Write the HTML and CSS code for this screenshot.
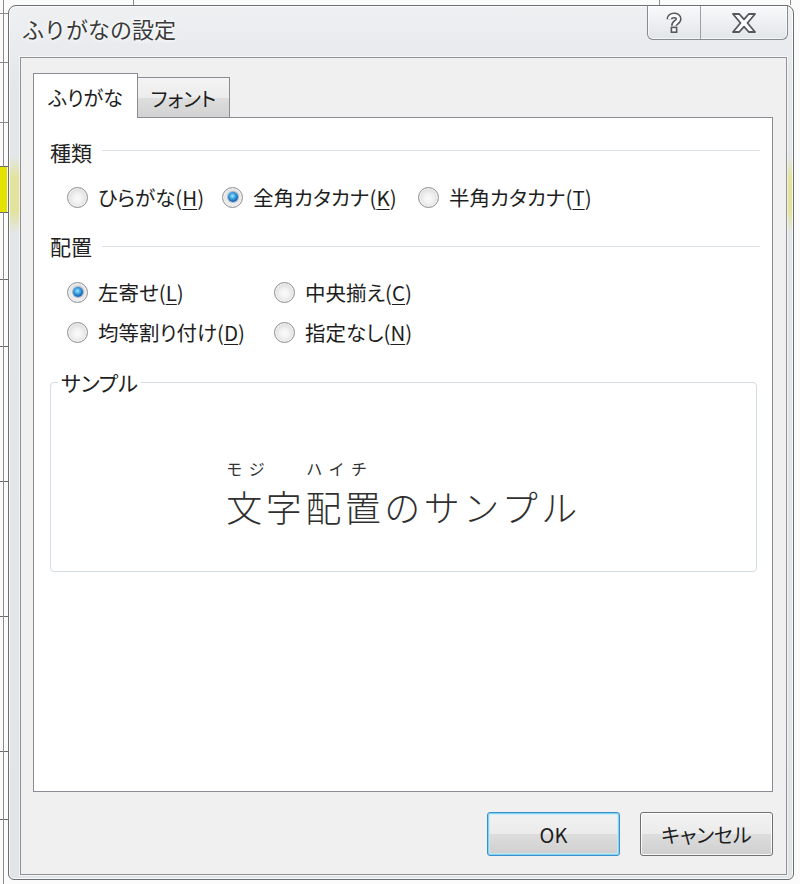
FILE: index.html
```html
<!DOCTYPE html>
<html lang="ja">
<head>
<meta charset="utf-8">
<title>ふりがなの設定</title>
<link rel="stylesheet" href="styles.css">
</head>
<body>
<div class="window">
  <div class="titlebar">
    <div class="title">ふりがなの設定</div>
    <div class="caption">
      <div class="cap-btn help">
        <svg width="16" height="22" viewBox="0 0 16 22">
          <path d="M3.4 7.2 C3.4 2.4 12.6 2.2 12.6 7 C12.6 10.4 8 10.2 8 13.8" fill="none" stroke="#55585c" stroke-width="6"/>
          <path d="M3.4 7.2 C3.4 2.4 12.6 2.2 12.6 7 C12.6 10.4 8 10.2 8 13.8" fill="none" stroke="#fdfdfd" stroke-width="3"/>
          <rect x="5.4" y="15.4" width="5.2" height="4.8" fill="#fdfdfd" stroke="#55585c" stroke-width="1.6"/>
        </svg>
      </div>
      <div class="cap-btn close">
        <svg width="24" height="20" viewBox="0 0 24 20">
          <polygon points="1,1 7.2,1 12,6.4 16.8,1 23,1 15.5,10 23,19 16.8,19 12,13.6 7.2,19 1,19 8.5,10" fill="#fdfdfd" stroke="#55585c" stroke-width="1.8" stroke-linejoin="round"/>
        </svg>
      </div>
    </div>
  </div>

  <div class="client">
    <div class="tabs">
      <div class="tab active">ふりがな</div>
      <div class="tab inactive">フォント</div>
    </div>
    <div class="panel">
      <div class="head h1"><span>種類</span><span class="rule"></span></div>
      <div class="row kind r1">
        <div class="radio"><span class="dot"></span><span>ひらがな(<u>H</u>)</span></div>
        <div class="radio"><span class="dot on"><span class="pip"></span></span><span>全角カタカナ(<u>K</u>)</span></div>
        <div class="radio"><span class="dot"></span><span>半角カタカナ(<u>T</u>)</span></div>
      </div>

      <div class="head h2"><span>配置</span><span class="rule"></span></div>
      <div class="row place r2">
        <div class="radio"><span class="dot on"><span class="pip"></span></span><span>左寄せ(<u>L</u>)</span></div>
        <div class="radio"><span class="dot"></span><span>中央揃え(<u>C</u>)</span></div>
      </div>
      <div class="row place r3">
        <div class="radio"><span class="dot"></span><span>均等割り付け(<u>D</u>)</span></div>
        <div class="radio"><span class="dot"></span><span>指定なし(<u>N</u>)</span></div>
      </div>

      <fieldset class="sample">
        <legend>サンプル</legend>
        <div class="sample-body">
          <div class="sample-inner">
            <div class="ruby"><span class="rb1">モジ</span><span>ハイチ</span></div>
            <div class="main">文字配置のサンプル</div>
          </div>
        </div>
      </fieldset>
    </div>

    <div class="buttons">
      <button class="btn default">OK</button>
      <button class="btn">キャンセル</button>
    </div>
  </div>
</div>
</body>
</html>
```

FILE: styles.css
```css
html, body {
  margin: 0;
}

body {
  width: 800px;
  height: 884px;
  box-sizing: border-box;
  overflow: hidden;
  padding: 5px 6px 0 8px;
  font-family: "Noto Sans CJK JP", "Noto Sans", sans-serif;
  font-feature-settings: "palt";
  background-color: #fbfbfb;
  background-image:
    linear-gradient(#e6e200, #e6e200),
    linear-gradient(#8c8c8c, #8c8c8c),
    linear-gradient(#8c8c8c, #8c8c8c),
    linear-gradient(#8c8c8c, #8c8c8c),
    linear-gradient(#8c8c8c, #8c8c8c),
    linear-gradient(#8c8c8c, #8c8c8c),
    linear-gradient(#8c8c8c, #8c8c8c),
    linear-gradient(#8c8c8c, #8c8c8c),
    linear-gradient(#6a6a6a, #6a6a6a),
    linear-gradient(#6a6a6a, #6a6a6a),
    repeating-linear-gradient(to bottom, transparent 0 66.5px, #6a6a6a 66.5px 67.5px);
  background-position:
    0 167px,
    3px 0,
    133px 0,
    659px 0,
    790px 0,
    0 13px,
    0 62px,
    0 122px,
    0 166px,
    0 212px,
    0 212px;
  background-size:
    7px 45px,
    1px 100%,
    1px 5px,
    1px 5px,
    1px 5px,
    8px 1px,
    8px 1px,
    8px 1px,
    8px 1px,
    8px 1px,
    8px 100%;
  background-repeat: no-repeat;
}

/* ---------- window frame ---------- */
.window {
  width: 786px;
  height: 875px;
  box-sizing: border-box;
  border: 1px solid #6b6e73;
  border-radius: 8px 8px 6px 6px;
  background:
    linear-gradient(to bottom, transparent 150px, rgba(226, 221, 70, 0.45) 172px, rgba(226, 221, 70, 0.45) 205px, transparent 228px),
    linear-gradient(to bottom, #eef0f2 0, #e4e7ea 80px, #e2e5e8 100%);
  box-shadow: inset 0 0 0 1px rgba(255, 255, 255, 0.75);
  display: flex;
  flex-direction: column;
}

.titlebar {
  flex: none;
  height: 51px;
  display: flex;
  justify-content: space-between;
  align-items: flex-start;
}

.title {
  margin: 8px 0 0 13px;
  font-size: 22px;
  line-height: 28px;
  color: #3a3a3a;
  font-feature-settings: normal;
  text-shadow: 0 0 6px #fff, 0 0 3px #fff;
}

.caption {
  display: flex;
  height: 35px;
  box-sizing: border-box;
  margin: -1px 5px 0 0;
  border: 1px solid #878b92;
  border-top-color: #6b6e73;
  border-radius: 0 0 6px 6px;
  overflow: hidden;
  background: linear-gradient(to bottom, rgba(255, 255, 255, 0.6), rgba(238, 240, 243, 0.5) 50%, rgba(222, 226, 230, 0.6));
  box-shadow: inset 0 0 0 1px rgba(255, 255, 255, 0.6);
}

.cap-btn {
  display: flex;
  align-items: center;
  justify-content: center;
}

.help {
  width: 52px;
  padding-top: 1px;
}

.close {
  width: 86px;
  border-left: 1px solid #9ba0a6;
}

/* ---------- client area ---------- */
.client {
  flex: 1;
  margin: 0 6px 4px 11px;
  border: 1px solid #8f9296;
  background: #f0f0f0;
  display: flex;
  flex-direction: column;
  box-shadow: 0 0 0 1px rgba(255, 255, 255, 0.55);
}

.tabs {
  flex: none;
  display: flex;
  align-items: flex-end;
  height: 45px;
  margin: 15px 0 -1px 12px;
  position: relative;
  z-index: 1;
}

.tab {
  box-sizing: border-box;
  display: flex;
  align-items: center;
  justify-content: center;
  font-size: 20px;
  color: #1e1e1e;
  border: 1px solid #898c95;
  border-bottom: none;
}

.tab.active {
  width: 105px;
  height: 45px;
  padding-top: 3px;
  background: #fff;
}

.tab.inactive {
  width: 92px;
  height: 40px;
  margin-bottom: 1px;
  padding-top: 2px;
  border-left: none;
  background: linear-gradient(to bottom, #f4f4f4, #ececec 50%, #dedede 51%, #d2d2d2);
}

.panel {
  flex: none;
  height: 675px;
  box-sizing: border-box;
  margin: 0 13px 0 12px;
  padding: 0 12px 0 16px;
  border: 1px solid #898c95;
  background: #fff;
  display: flex;
  flex-direction: column;
}

.head {
  display: flex;
  align-items: center;
  gap: 10px;
  height: 24px;
  font-size: 21px;
  line-height: 24px;
  color: #222;
}

.head .rule {
  flex: 1;
  height: 1px;
  margin-top: -3px;
  background: #dbe2e9;
}

.h1 { margin-top: 22px; }
.r1 { margin-top: 21px; }
.h2 { margin-top: 25px; }
.r2 { margin-top: 22px; }
.r3 { margin-top: 16px; }

.h2 .rule {
  margin-top: 0;
}

.row {
  display: grid;
  height: 24px;
  padding-left: 17px;
  align-items: center;
}

.row.kind {
  grid-template-columns: 155px 196px auto;
}

.row.place {
  grid-template-columns: 207px auto;
}

.radio {
  display: flex;
  align-items: center;
  gap: 10px;
  font-size: 20.5px;
  line-height: 24px;
  color: #1e1e1e;
  white-space: nowrap;
}

.radio u {
  text-decoration-thickness: 1px;
  text-underline-offset: 3px;
}

.dot {
  flex: none;
  width: 21px;
  height: 21px;
  box-sizing: border-box;
  border-radius: 50%;
  border: 1px solid #8c8e91;
  background: radial-gradient(circle at 50% 55%, #fbfbfb 0, #f1f1f1 35%, #d9d9d9 75%, #cfcfcf 100%);
  box-shadow: inset 0 0 0 1px #f6f6f6;
  display: flex;
  align-items: center;
  justify-content: center;
}

.pip {
  width: 10px;
  height: 10px;
  border-radius: 50%;
  background: radial-gradient(circle at 45% 40%, #a8e6ff 0, #47aee8 30%, #1766b4 65%, #0c3f7d 100%);
  box-shadow: 0 0 0 1px rgba(20, 70, 130, 0.35);
}

/* ---------- sample group ---------- */
.sample {
  margin: 26px 3px 0 0;
  padding: 0;
  min-width: 0;
  border: 1px solid #d5dde4;
  border-radius: 4px;
}

.sample legend {
  margin-left: 7px;
  padding: 0 3px;
  font-size: 21px;
  line-height: 24px;
  color: #222;
}

.sample-body {
  height: 177px;
  display: flex;
  justify-content: center;
}

.sample-inner {
  margin-top: 64px;
  display: flex;
  flex-direction: column;
}

.ruby {
  display: flex;
  font-size: 16px;
  line-height: 20px;
  letter-spacing: 6.5px;
  color: #333;
  font-feature-settings: normal;
}

.ruby .rb1 {
  width: 80px;
}

.main {
  margin-top: 8px;
  font-size: 36px;
  line-height: 40px;
  letter-spacing: 3.5px;
  font-weight: 300;
  color: #303030;
  font-feature-settings: normal;
}

/* ---------- buttons ---------- */
.buttons {
  flex: none;
  display: flex;
  justify-content: flex-end;
  gap: 20px;
  margin-top: 20px;
  padding-right: 13px;
}

.btn {
  width: 133px;
  height: 44px;
  box-sizing: border-box;
  padding: 0;
  border: 1px solid #707070;
  border-radius: 3px;
  background: linear-gradient(to bottom, #f2f2f2, #ebebeb 50%, #dddddd 51%, #cfcfcf);
  box-shadow: inset 0 0 0 1px rgba(255, 255, 255, 0.85);
  font-family: "Noto Sans CJK JP", "Noto Sans", sans-serif;
  font-feature-settings: "palt";
  font-size: 20px;
  color: #1e1e1e;
}

.btn.default {
  border-color: #3c8fc8;
  box-shadow: inset 0 0 0 1px #7fd3f3, inset 0 0 0 2px rgba(190, 235, 250, 0.7);
}
```
